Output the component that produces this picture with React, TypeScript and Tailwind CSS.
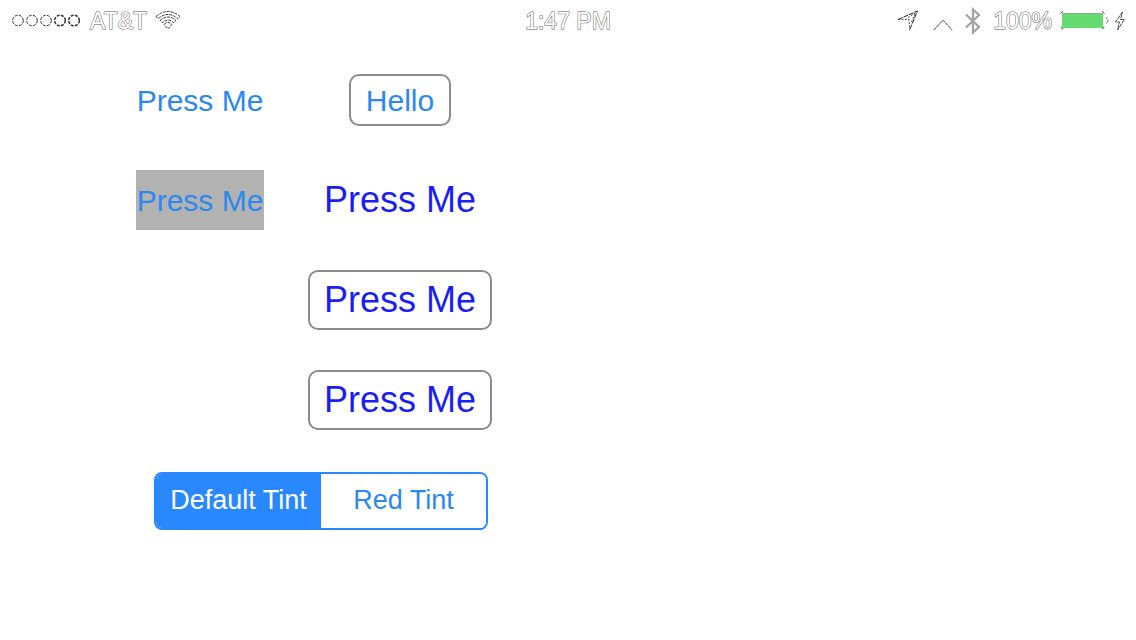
import { useState } from "react";

const outlined = "text-white [-webkit-text-stroke:1px_#5c5c5c] [paint-order:stroke]";

function SignalDots() {
  return (
    <svg width="70" height="14" viewBox="0 0 70 14" fill="none" stroke="#333" strokeWidth="1" aria-label="Signal strength">
      {[6, 20, 34, 48, 62].map((cx, i) => (
        <circle key={cx} cx={cx} cy="6.5" r="5.3" strokeDasharray="3 1.2" strokeWidth={i > 2 ? 1.5 : 1} />
      ))}
    </svg>
  );
}

function Wifi() {
  return (
    <svg width="26" height="20" viewBox="0 0 26 20" fill="none" stroke="#222" strokeWidth="0.9" strokeDasharray="3 1" aria-label="Wi-Fi">
      <path d="M1 5.5Q13-4.5 25 5.5L22.8 7.7Q13-.8 3.2 7.7Z" />
      <path d="M5 9.5Q13 2.5 21 9.5L18.8 11.7Q13 6.8 7.2 11.7Z" />
      <path d="M9 13.5Q13 9.5 17 13.5L13 17.8Z" />
    </svg>
  );
}

function Location() {
  return (
    <svg width="22" height="22" viewBox="0 0 22 22" fill="none" stroke="#222" aria-label="Location">
      <path d="M1 9.5 20.5 1 12.5 20" strokeDasharray="5 1" strokeWidth="1" />
      <path d="M1 9.5 12 9.5 12.5 20M18.5 3 10 8M18 4 14 13" strokeDasharray="2 1.4" strokeWidth="0.8" />
    </svg>
  );
}

function Chevron() {
  return (
    <svg width="20" height="12" viewBox="0 0 20 12" fill="none" stroke="#333" strokeWidth="1" aria-label="Orientation">
      <path d="M.8 11 10 1.2 19.2 11" strokeDasharray="3.5 0.8" />
    </svg>
  );
}

function Bluetooth() {
  return (
    <svg width="16" height="28" viewBox="0 0 16 28" fill="none" stroke="#a3a3a3" strokeWidth="2.3" aria-label="Bluetooth">
      <path d="M1 7.5 14 20 8 25.5V2.5L14 8 1 20.5" />
    </svg>
  );
}

function Battery() {
  return (
    <svg width="50" height="22" viewBox="0 0 50 22" fill="none" aria-label="Battery full">
      <rect x="2" y="3" width="41" height="15" fill="#66db70" />
      <path d="M2 3.5H43" stroke="#92a795" strokeWidth="1" />
      <path d="M.7 3.5 3 1.2M42 1.2 44.3 3.5M.7 17 3 19.3M42 19.3 44.3 17" stroke="#333" strokeWidth="1" />
      <path d="M46 7.5Q50 10.5 46 13.5" stroke="#444" strokeWidth="1" strokeDasharray="2 1" />
    </svg>
  );
}

function Bolt() {
  return (
    <svg width="12" height="20" viewBox="0 0 12 20" fill="none" stroke="#333" strokeWidth="0.9" aria-label="Charging">
      <path d="M8.5 1 1.5 11H5.5L3.5 19 10.5 8.5H6.5Z" strokeDasharray="4 0.7" />
    </svg>
  );
}

function StatusBar() {
  return (
    <header className="grid h-[41px] grid-cols-[1fr_auto_1fr] items-center px-[10px] text-[23px] leading-10">
      <div className="flex items-center gap-2 pl-[2px]">
        <SignalDots />
        <span className={outlined}>AT&amp;T</span>
        <Wifi />
      </div>
      <time className={outlined}>1:47 PM</time>
      <div className="flex items-center justify-end">
        <Location />
        <span className="pr-3 pl-[14px] pt-2">
          <Chevron />
        </span>
        <Bluetooth />
        <span className={`pr-2 pl-3 ${outlined}`}>100%</span>
        <Battery />
        <span className="pl-1">
          <Bolt />
        </span>
      </div>
    </header>
  );
}

const tints = ["Default Tint", "Red Tint"];

export default function App() {
  const [selected, setSelected] = useState(0);

  return (
    <div className="min-h-screen bg-white font-['Liberation_Sans',Arial,sans-serif]">
      <StatusBar />
      <main className="pt-[9px] pl-[100px]">
        <div className="grid grid-cols-[200px_200px] auto-rows-[100px] place-items-center">
          <button className="h-[60px] px-px text-[30px] text-[#2b88f0]">Press Me</button>
          <button className="h-[52px] rounded-[10px] border-2 border-[#8c8c8c] px-[15px] text-[30px] text-[#2b88f0]">
            Hello
          </button>
          <button className="h-[60px] bg-[#b2b2b2] px-px text-[30px] text-[#2b88f0]">Press Me</button>
          <button className="h-[60px] text-[36px] text-[#1a1ef0]">Press Me</button>
          <button className="col-start-2 h-[60px] rounded-[10px] border-2 border-[#8c8c8c] px-[14px] text-[36px] text-[#1a1ef0]">
            Press Me
          </button>
          <button className="col-start-2 h-[60px] rounded-[10px] border-2 border-[#8c8c8c] px-[14px] text-[36px] text-[#1a1ef0]">
            Press Me
          </button>
        </div>
        <div className="pt-[22px] pl-[54px]">
          <div role="group" aria-label="Tint" className="inline-grid h-[58px] grid-cols-2 overflow-hidden rounded-[8px] border-2 border-[#2a88ff]">
            {tints.map((label, i) => (
              <button
                key={label}
                aria-pressed={selected === i}
                onClick={() => setSelected(i)}
                className={`w-[165px] pb-[2px] text-[27px] ${selected === i ? "bg-[#2a88ff] text-white" : "bg-white text-[#2b88f0]"}`}
              >
                {label}
              </button>
            ))}
          </div>
        </div>
      </main>
    </div>
  );
}
